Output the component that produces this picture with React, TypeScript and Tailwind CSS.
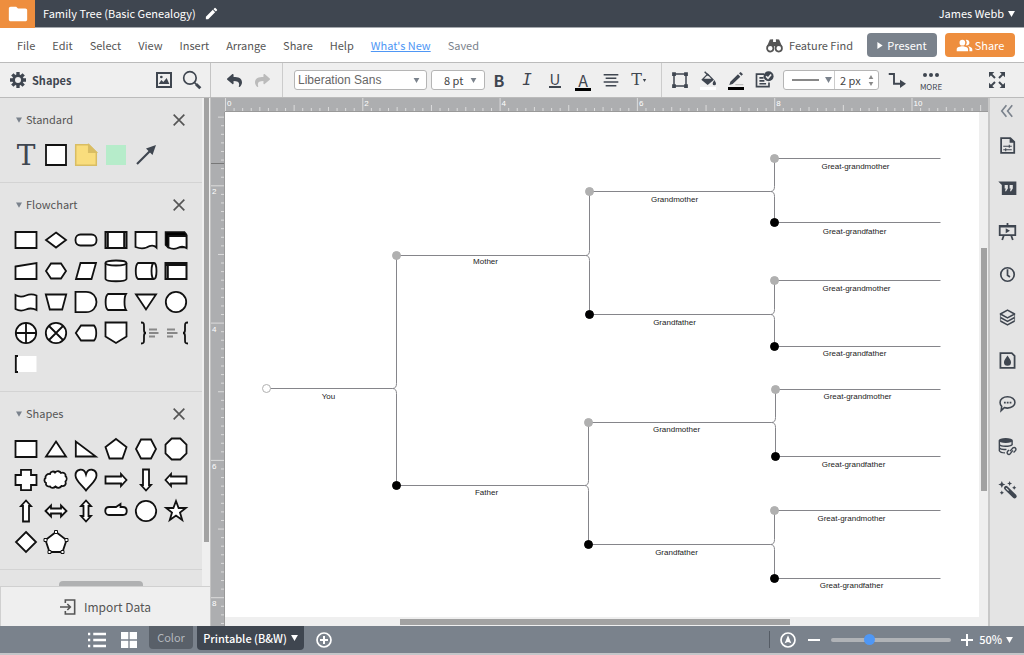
import type { ReactNode } from "react";
import { FaReply, FaShare } from "react-icons/fa";
import { MdEdit, MdFolder, MdPeopleAlt } from "react-icons/md";

const menuItems = ["File", "Edit", "Select", "View", "Insert", "Arrange", "Share", "Help"];

function Caret({ className = "" }: { className?: string }) {
  return (
    <svg viewBox="0 0 8 7" className={`shrink-0 fill-current ${className}`} aria-hidden="true">
      <path d="M0 0h8L4 7z" />
    </svg>
  );
}

function Icon({ children, className = "size-6" }: { children: ReactNode; className?: string }) {
  return (
    <svg
      viewBox="0 0 24 24"
      className={`shrink-0 ${className}`}
      fill="none"
      stroke="currentColor"
      strokeWidth="2"
      aria-hidden="true"
    >
      {children}
    </svg>
  );
}

/* ---------- shape library ---------- */

const standardShapes = [
  {
    name: "Text",
    art: (
      <text x="12" y="22" textAnchor="middle" fontSize="28" stroke="none" fill="#3f4650" fontFamily="DejaVu Serif, serif">
        T
      </text>
    ),
  },
  { name: "Block", art: <path d="M2 2h20v20H2z" /> },
  {
    name: "Note",
    art: (
      <g stroke="#d9bd63" strokeWidth="1.5">
        <path d="M1.700 1.700h13l7.600 7.600v13H1.700z" fill="#f9dd7d" />
        <path d="M14.700 1.700v7.600h7.600z" fill="#d9bd63" />
      </g>
    ),
  },
  { name: "Hotspot", art: <path d="M2 2h20v20H2z" fill="#b6ecca" stroke="none" /> },
  {
    name: "Line",
    art: (
      <g stroke="#3f4650">
        <path d="M3 21 17 7" strokeWidth="2.200" />
        <path d="m22 2-3.500 10-6.500-6.500z" fill="#3f4650" stroke="none" />
      </g>
    ),
  },
];

const flowchartShapes = [
  { name: "Process", art: <path d="M1.500 4h21v16h-21z" /> },
  { name: "Decision", art: <path d="m12 4.500 10 7.500-10 7.500L2 12z" /> },
  { name: "Terminator", art: <rect x="1.500" y="6.500" width="21" height="11" rx="5" /> },
  {
    name: "Predefined process",
    art: <path d="M1.500 4h21v16h-21zM3.800 4v16M20.200 4v16" strokeWidth="2" />,
  },
  { name: "Document", art: <path d="M1.500 4h21v15.500c-3-3-6-2.500-10 0-4 1.500-7 1-11-.500z" /> },
  {
    name: "Multiple documents",
    art: (
      <g>
        <path d="M1.500 4h19l2 2.500v13H4L1.500 17z" fill="#000" strokeWidth="1.500" />
        <path d="M4.500 8h18v12c-3-2-5-2.500-9 0-3 1.500-6 1-9-.500z" />
      </g>
    ),
  },
  { name: "Manual input", art: <path d="m1.500 7.500 21-3.500v16h-21z" /> },
  { name: "Preparation", art: <path d="M7 4.500h10l5 7.500-5 7.500H7L2 12z" /> },
  { name: "Data", art: <path d="M6.500 4h15.500l-4.500 16H2z" /> },
  {
    name: "Database",
    art: (
      <g>
        <path d="M1.500 4v16c1 3 20 3 21 0V4" />
        <ellipse cx="12" cy="4" rx="10.500" ry="2.500" />
      </g>
    ),
  },
  {
    name: "Direct access storage",
    art: (
      <g>
        <path d="M20 4H4c-3 2-3 14 0 16h16" />
        <ellipse cx="20" cy="12" rx="2.500" ry="8" />
      </g>
    ),
  },
  { name: "Internal storage", art: <path d="M1.500 4h21v16h-21zM3.800 4v16M1.500 6h21" strokeWidth="2" /> },
  { name: "Paper tape", art: <path d="M1.500 5c4 2.500 7 2 10.500.500s7-1.500 10.500 0V20c-4-2-7-2-10.500-.500s-7 1.500-10.500-.500z" /> },
  { name: "Manual operation", art: <path d="M1.800 4.500h20.400l-4 15H5.800z" /> },
  { name: "Delay", art: <path d="M1.500 1.800H12c14 0 14 20.400 0 20.400H1.500z" /> },
  { name: "Stored data", art: <path d="M4 4h18c-2 3-2 13 0 16H4C.800 18 .800 6 4 4z" /> },
  { name: "Merge", art: <path d="M2 4.500h20l-10 15z" /> },
  { name: "Connector", art: <circle cx="12" cy="12" r="10.200" /> },
  {
    name: "Or",
    art: (
      <g>
        <circle cx="12" cy="12" r="10.200" />
        <path d="M12 2v20M2 12h20" />
      </g>
    ),
  },
  {
    name: "Summing junction",
    art: (
      <g>
        <circle cx="12" cy="12" r="10.200" />
        <path d="m5 5 14 14M19 5 5 19" />
      </g>
    ),
  },
  { name: "Display", art: <path d="M7 4.500h13c3 3 3 12 0 15H7L1.800 12z" /> },
  { name: "Off-page link", art: <path d="M1.500 1.500h21v14L12 22 1.500 15.500z" /> },
  {
    name: "Brace note right",
    art: (
      <g fill="none">
        <path d="M7 1.500c3 0 3 1 3 4V9c0 2 .500 3 2 3-1.500 0-2 1-2 3v3.500c0 3 0 4-3 4" />
        <path d="M15 8.500h8M15 12h9.500M15 15.500h6" stroke="#888" strokeWidth="2.200" />
      </g>
    ),
  },
  {
    name: "Brace note left",
    art: (
      <g fill="none">
        <path d="M24 1.500c-3 0-3 1-3 4V9c0 2-.500 3-2 3 1.500 0 2 1 2 3v3.500c0 3 0 4 3 4" />
        <path d="M3 8.500h8M3 12h10.500M3 15.500h6" stroke="#888" strokeWidth="2.200" />
      </g>
    ),
  },
  {
    name: "Bracket note",
    art: (
      <g>
        <path d="M3 4h19.500v16H3z" stroke="none" />
        <path d="M4 4H1.800v16H4" fill="none" />
      </g>
    ),
  },
];

const basicShapes = [
  { name: "Rectangle", art: <path d="M1.500 4h21v16h-21z" /> },
  { name: "Triangle", art: <path d="M12 4.500 22 19.500H2z" /> },
  { name: "Right triangle", art: <path d="M1.800 4.500v15h20z" /> },
  { name: "Pentagon", art: <path d="m12 2 10.500 8-4 11.500h-13L1.500 10z" /> },
  { name: "Hexagon", art: <path d="M7 2.500h10l5 9.500-5 9.500H7L2 12z" /> },
  { name: "Octagon", art: <path d="M7.700 1.500h8.600l6.200 6.200v8.600l-6.200 6.200H7.700l-6.200-6.200V7.700z" /> },
  { name: "Cross", art: <path d="M7 1.800h10V7h5.500v10H17v5.200H7V17H1.500V7H7z" /> },
  {
    name: "Cloud",
    art: (
      <path d="M6 6c.500-3 4-3 5-1.500 2-2 5-1.500 6 .500 3-1 5 1 4.500 3 1.500 1.500 1.500 4 0 5.500 1 3-1 5-4 4.500-1 2-4 2.500-6 .500-2 2-4.500 1.500-5.500 0-3 .500-4.500-1.500-4-3.500-2-1-2-4-.500-5C1 8 3 5.500 6 6z" />
    ),
  },
  { name: "Heart", art: <path d="M12 22.500C8 17 1.500 13 1.500 7.500c0-7 8.500-8 10.500-1 2-7 10.500-6 10.500 1C22.500 13 16 17 12 22.500z" /> },
  { name: "Arrow right", art: <path d="M1.500 8.500H17V6l5.500 6-5.500 6v-2.500H1.500z" /> },
  { name: "Arrow down", art: <path d="M9 1.500V17H7l5 5.500 5-5.500h-2V1.500z" /> },
  { name: "Arrow left", art: <path d="M22.500 8.500H7V6l-5.500 6L7 18v-2.500h15.500z" /> },
  { name: "Arrow up", art: <path d="M9 22.500V7H7l5-5.500L17 7h-2v15.500z" /> },
  { name: "Double arrow", art: <path d="M1.500 12 7 6.500v3h10v-3l5.500 5.500-5.500 5.500v-3H7v3z" /> },
  { name: "Vertical double arrow", art: <path d="m12 1.500 5 5.500h-2.500v10H17l-5 5.500L7 17h2.500V7H7z" /> },
  { name: "Callout", art: <path d="M5 8h7l4.500-3V8H19c5 0 5 8 0 8H5c-5 0-5-8 0-8z" /> },
  { name: "Circle", art: <circle cx="12" cy="12" r="10.200" /> },
  { name: "Star", art: <path d="m12 2 2.600 7h7.200l-5.800 4.500 2.200 7.500-6.200-4.500L5.800 21 8 13.500 2.200 9h7.200z" /> },
  { name: "Diamond", art: <path d="M12 2 22 12 12 22 2 12z" /> },
  {
    name: "Polygon",
    art: (
      <g>
        <path d="m12 2 10.500 8-4 12h-13l-4-12z" />
        <g strokeWidth="1">
          <path d="M10.500.500h3v3h-3zM21 8.500h3v3h-3zM17 20.500h3v3h-3zM4 20.500h3v3H4zM0 8.500h3v3H0z" />
        </g>
      </g>
    ),
  },
];

const shapeGroups = [
  { title: "Standard", shapes: standardShapes },
  { title: "Flowchart", shapes: flowchartShapes },
  { title: "Shapes", shapes: basicShapes },
];

function ShapeGroup({ title, shapes }: { title: string; shapes: { name: string; art: ReactNode }[] }) {
  return (
    <section className="border-b border-[#d3d3d3] pb-[10px]">
      <div className="flex h-[43px] items-center pr-[15px] pl-4">
        <button className="flex items-center gap-1 text-[#555]">
          <Caret className="h-[6px] w-[6px] text-[#7a828c]" />
          <h3 className="text-[11px]">{title}</h3>
        </button>
        <button aria-label={`Close ${title}`} className="ml-auto text-[#555]">
          <Icon className="size-4">
            <path d="m4 4 16 16M20 4 4 20" strokeWidth="2.500" />
          </Icon>
        </button>
      </div>
      <div className="grid grid-cols-[repeat(6,30px)] px-[11px]">
        {shapes.map((shape) => (
          <button key={shape.name} title={shape.name} className="flex h-[31px] items-start justify-center pt-[2px]">
            <svg viewBox="0 0 24 24" className="size-6 overflow-visible" fill="#fff" stroke="#111" strokeWidth="1.800">
              {shape.art}
            </svg>
          </button>
        ))}
      </div>
    </section>
  );
}

function ShapePanel() {
  return (
    <aside className="flex w-[211px] shrink-0 flex-col border-r border-[#c4c4c4] bg-[#e4e4e4]">
      <div className="flex min-h-0 flex-1">
        <div className="relative flex-1 overflow-hidden">
          {shapeGroups.map((group) => (
            <ShapeGroup key={group.title} title={group.title} shapes={group.shapes} />
          ))}
          {/* resize handle */}
          <div className="absolute bottom-0 left-[59px] h-[5px] w-[84px] rounded-t bg-[#b0b1b2]" />
        </div>
        <div className="flex w-2 justify-center bg-[#efefef]">
          <div className="h-[91%] w-[5px] bg-[#a2a2a2]" />
        </div>
      </div>
      <button className="flex h-10 shrink-0 items-center justify-center gap-2 border-t border-l border-[#d0d0d0] bg-[#efefef] text-xs text-[#555]">
        <Icon className="size-4">
          <path d="M8 6V1.500h14v21H8V18M0 12h15M11 7.500l4.500 4.500-4.500 4.500" strokeWidth="2.400" />
        </Icon>
        Import Data
      </button>
    </aside>
  );
}

/* ---------- header ---------- */

function Header() {
  return (
    <header className="shrink-0 text-[11px]">
      <div className="flex h-7 items-center border-b border-[#a5a9ae] bg-[#3f4650] text-white">
        <button aria-label="Documents" className="flex h-7 w-[35px] items-center justify-center bg-[#ee8e3e]">
          <MdFolder className="size-[22px]" />
        </button>
        <h1 className="ml-2">Family Tree (Basic Genealogy)</h1>
        <button aria-label="Rename" className="ml-2">
          <MdEdit className="size-[15px]" />
        </button>
        <button className="mr-[9px] ml-auto flex items-center gap-1">
          James Webb
          <Caret className="h-[6px] w-[7px]" />
        </button>
      </div>
      <div className="flex h-[35px] items-center border-b border-[#bbb] bg-white pr-[9px] pl-[17px] text-[#555]">
        <nav className="flex items-center gap-[17px]">
          {menuItems.map((item) => (
            <button key={item}>{item}</button>
          ))}
        </nav>
        <a href="#whats-new" className="ml-[17px] text-[#4f97f5] underline">
          What's New
        </a>
        <span className="ml-[17px] text-[#7a828c]">Saved</span>
        <button className="ml-auto flex items-center gap-[6px]">
          <Icon className="size-[17px]">
            <path d="M5.500 3.500 10 3v4h4V3l4.500.500L23 14l-9 2v-3h-4v3l-9-2z" fill="currentColor" stroke="none" />
            <circle cx="6" cy="16" r="4.500" fill="#fff" strokeWidth="2.500" />
            <circle cx="18" cy="16" r="4.500" fill="#fff" strokeWidth="2.500" />
          </Icon>
          Feature Find
        </button>
        <button className="ml-[14px] flex h-6 w-[70px] items-center justify-center gap-1 rounded bg-[#7a828c] text-white">
          <svg viewBox="0 0 6 8" className="h-[7px] w-[6px] fill-current">
            <path d="M0 0v8l6-4z" />
          </svg>
          Present
        </button>
        <button className="ml-2 flex h-6 w-[70px] items-center justify-center gap-[2px] rounded bg-[#ee8e3e] text-white">
          <MdPeopleAlt className="size-[17px]" />
          Share
        </button>
      </div>
    </header>
  );
}

/* ---------- toolbar ---------- */

function Tool({ label, children }: { label: string; children: ReactNode }) {
  return (
    <button aria-label={label} title={label} className="flex h-7 w-7 shrink-0 items-center justify-center">
      {children}
    </button>
  );
}

function Toolbar() {
  return (
    <div className="flex h-[35px] shrink-0 items-center border-b border-[#bbb] bg-[#efefef] text-[#3f4650]">
      <div className="flex h-full w-[211px] shrink-0 items-center border-r border-[#c4c4c4] pr-1 pl-[10px]">
        <Icon className="size-4">
          <circle cx="12" cy="12" r="6.500" strokeWidth="4" />
          <path
            d="M12 0v5M12 19v5M0 12h5M19 12h5M3.500 3.500 7 7M17 17l3.500 3.500M20.500 3.500 17 7M7 17l-3.500 3.500"
            strokeWidth="5"
          />
        </Icon>
        <h2 className="ml-[6px] text-[11px] font-bold">Shapes</h2>
        <div className="ml-auto flex">
          <Tool label="Images">
            <Icon className="size-4">
              <path d="M1.500 1.500h21v21h-21z" strokeWidth="3" />
              <path d="m4 18 4-6 3 3 5-6 4 9z" fill="currentColor" stroke="none" />
              <circle cx="8" cy="7.500" r="2" fill="currentColor" stroke="none" />
            </Icon>
          </Tool>
          <Tool label="Search shapes">
            <Icon className="size-5">
              <circle cx="9.500" cy="9.500" r="7.500" />
              <path d="m15 15 2.500 2.500" />
              <path d="m17 17 5 5" strokeWidth="3.500" />
            </Icon>
          </Tool>
        </div>
      </div>

      <div className="flex h-full items-center border-r border-[#ccc] pr-[6px] pl-[9px]">
        <Tool label="Undo">
          <FaReply className="size-[15px]" />
        </Tool>
        <Tool label="Redo">
          <FaShare className="size-[15px] text-[#bbb]" />
        </Tool>
      </div>

      <div className="ml-[11px] flex items-center gap-1">
        <div className="relative flex">
          <select
            aria-label="Font"
            className="h-5 w-[133px] appearance-none rounded-[3px] border border-[#b5b5b5] bg-white pl-[3px] font-['Liberation_Sans',sans-serif] text-xs text-[#666]"
          >
            <option>Liberation Sans</option>
          </select>
          <Caret className="pointer-events-none absolute top-2 right-[7px] h-[5px] w-[7px] text-[#7a828c]" />
        </div>
        <div className="relative flex">
          <select
            aria-label="Font size"
            className="h-5 w-[54px] appearance-none rounded-[3px] border border-[#b5b5b5] bg-white pl-3 text-[11px] leading-4 text-[#444]"
          >
            <option>8 pt</option>
          </select>
          <Caret className="pointer-events-none absolute top-2 right-2 h-[5px] w-[7px] text-[#7a828c]" />
        </div>
      </div>

      <div className="flex h-full items-center border-r border-[#ccc] pr-2">
        <Tool label="Bold">
          <span className="text-base font-bold">B</span>
        </Tool>
        <Tool label="Italic">
          <span className="font-['DejaVu_Sans_Mono',monospace] text-base italic">I</span>
        </Tool>
        <Tool label="Underline">
          <span className="border-b-2 border-current px-px text-[15px] leading-[14px]">U</span>
        </Tool>
        <Tool label="Text color">
          <span className="flex flex-col items-center pt-1">
            <span className="text-base leading-[15px]">A</span>
            <span className="h-[3px] w-4 bg-black" />
          </span>
        </Tool>
        <Tool label="Align">
          <Icon className="size-4">
            <path d="M1 4h22M4 9.500h16M1 15h22M4 20.500h16" strokeWidth="2.300" />
          </Icon>
        </Tool>
        <Tool label="Text options">
          <span className="font-['DejaVu_Serif',serif] text-base">T</span>
          <Caret className="h-[3px] w-[5px]" />
        </Tool>
      </div>

      <div className="ml-1 flex items-center">
        <Tool label="Shape options">
          <Icon className="size-[18px]">
            <path d="M4 4h16v16H4z" />
            <path d="M1.500 1.500h5v5h-5zM17.500 1.500h5v5h-5zM1.500 17.500h5v5h-5zM17.500 17.500h5v5h-5z" fill="currentColor" stroke="none" />
          </Icon>
        </Tool>
        <Tool label="Fill color">
          <span className="flex flex-col items-center">
            <Icon className="size-4">
              <path d="m2 13 9.500-9.500L21 13l-9.500 8z" fill="currentColor" stroke="none" />
              <path d="m6 11.500 5.500-5.500 5.500 5.500z" fill="#efefef" stroke="none" />
              <path d="m7 1 6 6" strokeWidth="2.200" />
              <path d="M21.500 13.500c1.500 2.500 2.500 4 2.500 5.500a2.500 2.500 0 0 1-5 0c0-1.500 1-3 2.500-5.500z" fill="currentColor" stroke="none" />
            </Icon>
            <span className="h-[3px] w-4 bg-white" />
          </span>
        </Tool>
        <Tool label="Line color">
          <span className="flex flex-col items-center">
            <Icon className="size-4">
              <path d="m2 21 1.500-5L15 5l3.500 3.500L7 19.500zM16.500 3.500 19 1.500l3.500 3.500-2.500 2z" fill="currentColor" stroke="none" />
              <path d="M11 20.500h12" strokeWidth="1" stroke="#999" />
            </Icon>
            <span className="h-[3px] w-4 bg-black" />
          </span>
        </Tool>
        <Tool label="Apply theme">
          <Icon className="size-5">
            <path d="M12 5H3v15h15v-5M6.500 9.500h5M6.500 13h6M6.500 16.500h8" />
            <circle cx="17.500" cy="7.500" r="6" fill="currentColor" stroke="none" />
            <path d="m14.500 7.500 2.300 2.500 3.700-4.500" stroke="#efefef" />
          </Icon>
        </Tool>
      </div>

      <div className="ml-[5px] flex h-5 items-center rounded-[3px] border border-[#b5b5b5] bg-white">
        <button aria-label="Line style" className="flex h-full w-[51px] items-center justify-between border-r border-[#ccc] pr-[2px] pl-2">
          <span className="h-[2px] w-[27px] bg-[#888]" />
          <Caret className="h-[6px] w-[7px] text-[#7a828c]" />
        </button>
        <input aria-label="Line width" defaultValue="2 px" className="w-[33px] pl-[5px] text-[11px] leading-4 text-[#444]" />
        <span className="flex w-[10px] flex-col gap-[3px] text-[#888]">
          <Caret className="h-[4px] w-[6px] rotate-180" />
          <Caret className="h-[4px] w-[6px]" />
        </span>
      </div>

      <div className="ml-1 flex items-center gap-[6px]">
        <Tool label="Connector style">
          <Icon className="size-[18px]">
            <path d="M1 4h7v13h9" strokeWidth="2.500" />
            <path d="m16 11.500 8 5.500-8 5.500z" fill="currentColor" stroke="none" />
          </Icon>
        </Tool>
        <button className="flex w-7 flex-col items-center gap-1 pt-[6px] text-[8px] leading-[12px]">
          <span className="flex gap-[2px]">
            <span className="size-[4px] rounded-full bg-current" />
            <span className="size-[4px] rounded-full bg-current" />
            <span className="size-[4px] rounded-full bg-current" />
          </span>
          MORE
        </button>
      </div>

      <div className="mr-[13px] ml-auto">
        <Tool label="Full screen">
          <Icon className="size-4">
            <g fill="currentColor" stroke="none">
              <path d="M0 0h8L0 8zM24 0v8l-8-8zM0 24v-8l8 8zM24 24h-8l8-8z" />
            </g>
            <path d="m2 2 7 7M22 2l-7 7M2 22l7-7M22 22l-7-7" strokeWidth="3" />
          </Icon>
        </Tool>
      </div>
    </div>
  );
}

/* ---------- rulers ---------- */

const UNIT = 68.65;

function HorizontalRuler() {
  const ticks = Array.from({ length: 89 }, (_, i) => i);
  return (
    <svg className="h-[14px] w-full bg-[#adaeb0]" aria-hidden="true">
      {ticks.map((i) => {
        const x = 14.5 + (i * UNIT) / 8;
        const top = i % 16 === 0 ? 0 : i % 8 === 0 ? 7 : i % 4 === 0 ? 9 : 10;
        return <line key={i} x1={x} x2={x} y1={top} y2="13" stroke="#dcdcdc" />;
      })}
      {[0, 2, 4, 6, 8, 10].map((n) => (
        <text key={n} x={16 + n * UNIT} y="8" fontSize="8" fill="#fff" fontFamily="Liberation Sans, sans-serif">
          {n}
        </text>
      ))}
      <path d="M14 13.500h2000" stroke="#999" />
    </svg>
  );
}

function VerticalRuler() {
  const ticks = Array.from({ length: 67 }, (_, i) => i + 6);
  return (
    <svg className="h-full w-[14px] shrink-0 bg-[#adaeb0]" aria-hidden="true">
      {ticks.map((i) => {
        const y = -63.5 + (i * UNIT) / 8;
        const left = i % 16 === 0 ? 0 : i % 8 === 0 ? 7 : 10;
        return <line key={i} x1={left} x2="13" y1={y} y2={y} stroke="#dcdcdc" />;
      })}
      {[2, 4, 6, 8].map((n) => (
        <text key={n} x="1" y={-55 + n * UNIT} fontSize="8" fill="#fff" fontFamily="Liberation Sans, sans-serif">
          {n}
        </text>
      ))}
      <path d="M0 51.500h14" stroke="#777" />
      <path d="M13.500 0v2000" stroke="#999" />
    </svg>
  );
}

/* ---------- family tree ---------- */

type Person = {
  label: string;
  x: number;
  y: number;
  end: number;
  labelX: number;
  labelY: number;
  fill: string;
  parents?: [Person, Person];
};

const GRAY = "#b0b0b0";
const BLACK = "#000";

const person = (
  label: string,
  fill: string,
  [x, y, end]: [number, number, number],
  [labelX, labelY]: [number, number],
  parents?: [Person, Person],
): Person => ({ label, fill, x, y, end, labelX, labelY, parents });

const tree = person("You", "#fff", [42, 277, 172], [104, 287], [
  person("Mother", GRAY, [172, 144, 365], [261, 152], [
    person("Grandmother", GRAY, [365, 80, 550], [450, 90], [
      person("Great-grandmother", GRAY, [550, 47, 716], [631, 57]),
      person("Great-grandfather", BLACK, [550, 111, 716], [630, 122]),
    ]),
    person("Grandfather", BLACK, [365, 203, 550], [450, 213], [
      person("Great-grandmother", GRAY, [550, 169, 716], [632, 179]),
      person("Great-grandfather", BLACK, [550, 235, 716], [630, 244]),
    ]),
  ]),
  person("Father", BLACK, [172, 374, 364], [262, 383], [
    person("Grandmother", GRAY, [364, 311, 551], [452, 320], [
      person("Great-grandmother", GRAY, [551, 278, 716], [633, 287]),
      person("Great-grandfather", BLACK, [551, 345, 716], [629, 355]),
    ]),
    person("Grandfather", BLACK, [364, 433, 550], [452, 443], [
      person("Great-grandmother", GRAY, [550, 399, 716], [627, 409]),
      person("Great-grandfather", BLACK, [550, 467, 716], [627, 476]),
    ]),
  ]),
]);

function Branch({ node }: { node: Person }) {
  const { x, y, end, parents } = node;
  return (
    <g>
      {parents ? (
        <path
          d={`M${x} ${y}H${end - 4}Q${end} ${y} ${end} ${y - 5}V${parents[0].y}M${end - 4} ${y}Q${end} ${y} ${end} ${y + 5}V${parents[1].y}`}
          fill="none"
          stroke="#85858a"
        />
      ) : (
        <path d={`M${x} ${y}H${end}`} stroke="#85858a" />
      )}
      {parents?.map((p) => <Branch key={`${p.x}-${p.y}`} node={p} />)}
      <circle cx={x} cy={y} r="4" fill={node.fill} stroke={node.fill === BLACK ? BLACK : GRAY} />
      <text x={node.labelX} y={node.labelY} textAnchor="middle" fontSize="8" fill="#222">
        {node.label}
      </text>
    </g>
  );
}

function Canvas() {
  return (
    <main className="flex min-w-0 flex-1 flex-col">
      <HorizontalRuler />
      <div className="flex min-h-0 flex-1">
        <VerticalRuler />
        <div className="flex min-w-0 flex-1 flex-col">
          <div className="flex min-h-0 flex-1">
            <svg className="h-full min-w-0 flex-1 bg-white font-['Liberation_Sans',sans-serif]" role="img" aria-label="Family tree">
              {/* half-pixel shift keeps the hairlines crisp */}
              <g transform="translate(-0.5 -0.5)">
                <Branch node={tree} />
              </g>
            </svg>
            <div className="flex w-[9px] flex-col items-center bg-[#efefef]">
              <div className="h-[27%]" />
              <div className="h-[48%] w-[6px] bg-[#a2a2a2]" />
            </div>
          </div>
          <div className="flex h-[9px] items-center bg-[#efefef]">
            <div className="w-[23%]" />
            <div className="h-[6px] w-[51%] bg-[#a2a2a2]" />
          </div>
        </div>
      </div>
    </main>
  );
}

/* ---------- right dock ---------- */

const dockItems = [
  {
    name: "Page settings",
    art: (
      <g>
        <path d="M3 1.500h13l5.500 5.500v15.500H3z" strokeWidth="2.500" />
        <path d="M15 1v7h7z" fill="currentColor" stroke="none" />
        <path d="M6 13h12M6 18h12M14.500 11v4M9.500 16v4" strokeWidth="1.500" />
      </g>
    ),
  },
  {
    name: "Notes",
    art: (
      <g stroke="none">
        <path d="M-1 2h25.500v19H4V7z" fill="currentColor" />
        <path d="M8 7h4.500v5l-2.500 4H8.500l1-4H8zM15 7h4.500v5L17 16h-1.500l1-4H15z" fill="#e4e4e4" />
      </g>
    ),
  },
  {
    name: "Presentation",
    art: (
      <g>
        <path d="M1 4h22v13H1zM12 0v4M7 17l-2.500 7M17 17l2.500 7" strokeWidth="2.500" />
        <path d="M1 3h22v3.500H1zM9.500 7.500v7l6-3.500z" fill="currentColor" stroke="none" />
      </g>
    ),
  },
  {
    name: "History",
    art: (
      <g strokeWidth="2.400">
        <circle cx="12" cy="12" r="9.500" />
        <path d="M12 4.500V13l3.500 2.500" />
      </g>
    ),
  },
  {
    name: "Layers",
    art: (
      <g strokeLinejoin="round" strokeWidth="2.200">
        <path d="m12 1.500 10 5.500-10 5.500L2 7z" />
        <path d="m2 12 10 5.500L22 12M2 17l10 5.500L22 17" />
        <path d="M2 7v5M22 7v5M2 12v5M22 12v5" strokeWidth="1" />
      </g>
    ),
  },
  {
    name: "Theme",
    art: (
      <g>
        <path d="M2 1.500h16l4 4v17H2z" strokeWidth="2.500" />
        <path d="M12 5c2.500 4 5 6.500 5 9.500a5 5 0 0 1-10 0C7 11.500 9.500 9 12 5z" fill="currentColor" stroke="none" />
      </g>
    ),
  },
  {
    name: "Comments",
    art: (
      <g>
        <path d="M12 2.500c6 0 10.500 3.500 10.500 8s-4.500 8-10.500 8c-1.500 0-3-.200-4.500-.700L3 22l.800-6C2.300 14.500 1.500 12.500 1.500 10.500c0-4.500 4.500-8 10.500-8z" strokeWidth="2.200" />
        <path d="M7 9.500h2.500V12H7zM11 9.500h2.500V12H11zM15 9.500h2.500V12H15z" fill="currentColor" stroke="none" />
      </g>
    ),
  },
  {
    name: "Linked data",
    art: (
      <g>
        <ellipse cx="9.500" cy="3.500" rx="10" ry="3.500" fill="currentColor" stroke="none" />
        <path d="M.500 4v14c1 2 4 3 8 3M18.500 4v6M.500 9.500c2 3 15 3 18 0M.500 14c2 2.500 6 2.500 10 2" strokeWidth="2" />
        <path d="m15 17 4-4.500c3-2 5.500 1 4 3.500l-3 3M19 16l-3.500 4.500c-2 3-6 0-4-3l2-2" transform="translate(.500 1.500)" />
      </g>
    ),
  },
  {
    name: "Magic",
    art: (
      <g>
        <path d="m10 10 12 11.500" strokeWidth="6" strokeLinecap="round" />
        <path d="m10 10 3.500 3.500" stroke="#e4e4e4" strokeWidth="1.500" />
        <path
          d="m4 0 1.500 3.500L9 5 5.500 6.500 4 10 2.500 6.500-1 5l3.500-1.500zM15 0l1 2.500 2.500 1L16 4.500 15 7l-1-2.500-2.500-1 2.500-1zM4 13.500l1 2 2 1-2 1-1 2-1-2-2-1 2-1zM21.500 6.500l1 2 2 1-2 1-1 2-1-2-2-1 2-1z"
          fill="currentColor"
          stroke="none"
        />
      </g>
    ),
  },
];

function Dock() {
  return (
    <aside className="flex w-9 shrink-0 flex-col items-center border-l-2 border-[#c8c8c8] bg-[#e4e4e4] text-[#3f4650]">
      <button aria-label="Collapse dock" className="flex h-[26px] items-center text-[#7a828c]">
        <Icon className="size-[14px]">
          <path d="m11 2-8 10 8 10M21 2l-8 10 8 10" strokeWidth="2.800" />
        </Icon>
      </button>
      {dockItems.map((item) => (
        <button key={item.name} title={item.name} className="flex h-[43px] items-center">
          <Icon className="size-[17px] overflow-visible">{item.art}</Icon>
        </button>
      ))}
    </aside>
  );
}

/* ---------- footer ---------- */

function Footer() {
  return (
    <footer className="flex h-[29px] shrink-0 items-center border-b-2 border-[#c4c6c9] bg-[#7a828c] text-[11px] text-white">
      <button aria-label="Page list" className="ml-[88px]">
        <Icon className="size-[18px]">
          <path d="M0 4h3M7 4h17M0 12h3M7 12h17M0 20h3M7 20h17" strokeWidth="3.500" />
        </Icon>
      </button>
      <button aria-label="Page grid" className="ml-[15px]">
        <Icon className="size-4">
          <path d="M0 0h11v11H0zM13 0h11v11H13zM0 13h11v11H0zM13 13h11v11H13z" fill="currentColor" stroke="none" />
        </Icon>
      </button>
      <div className="ml-3 flex gap-1 self-start">
        <button className="h-[23px] w-11 rounded-b bg-[#596069] text-[#b3b7bd]">Color</button>
        <button className="flex h-6 w-[107px] items-center justify-center gap-1 rounded-b bg-[#3f4650] font-medium">
          Printable (B&amp;W)
          <Caret className="h-[6px] w-[7px]" />
        </button>
      </div>
      <button aria-label="Add page" className="ml-3">
        <Icon className="size-4">
          <circle cx="12" cy="12" r="10.500" strokeWidth="2.500" />
          <path d="M12 6v12M6 12h12" strokeWidth="3" />
        </Icon>
      </button>

      <div className="ml-auto flex items-center border-l border-[#555c65] pr-[11px] pl-[10px]">
        <button aria-label="Navigator">
          <Icon className="size-4">
            <circle cx="12" cy="12" r="10.500" strokeWidth="2.500" />
            <path d="m12 5 5 12-5-2-5 2z" fill="currentColor" stroke="none" />
          </Icon>
        </button>
        <button aria-label="Zoom out" className="ml-3">
          <Icon className="size-3">
            <path d="M0 12h24" strokeWidth="4" />
          </Icon>
        </button>
        <input
          type="range"
          aria-label="Zoom"
          defaultValue={30}
          className="ml-[11px] h-1 w-[120px] appearance-none rounded-full bg-[#b0b3b7] [&::-webkit-slider-thumb]:size-[11px] [&::-webkit-slider-thumb]:appearance-none [&::-webkit-slider-thumb]:rounded-full [&::-webkit-slider-thumb]:bg-[#4f97f5]"
        />
        <button aria-label="Zoom in" className="ml-[10px]">
          <Icon className="size-3">
            <path d="M0 12h24M12 0v24" strokeWidth="4" />
          </Icon>
        </button>
        <button className="ml-[6px] flex items-center gap-1 font-medium">
          50%
          <Caret className="h-[6px] w-[7px]" />
        </button>
      </div>
    </footer>
  );
}

export default function App() {
  return (
    <div className="flex h-screen flex-col overflow-hidden bg-[#efefef] font-['Noto_Sans_CJK_SC','Noto_Sans',sans-serif]">
      <Header />
      <Toolbar />
      <div className="flex min-h-0 flex-1">
        <ShapePanel />
        <Canvas />
        <Dock />
      </div>
      <Footer />
    </div>
  );
}
